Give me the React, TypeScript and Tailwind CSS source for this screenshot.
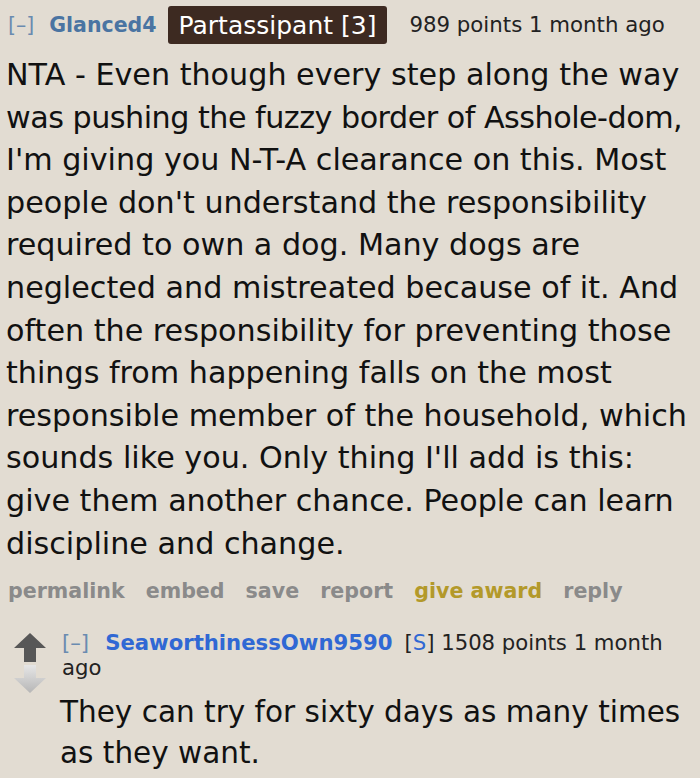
import React from 'react';

const actions = ['permalink', 'embed', 'save', 'report', 'give award', 'reply'];

// line breaks follow the reference
const bodyLines = [
    'NTA - Even though every step along the way',
    'was pushing the fuzzy border of Asshole-dom,',
    "I'm giving you N-T-A clearance on this. Most",
    "people don't understand the responsibility",
    'required to own a dog. Many dogs are',
    'neglected and mistreated because of it. And',
    'often the responsibility for preventing those',
    'things from happening falls on the most',
    'responsible member of the household, which',
    "sounds like you. Only thing I'll add is this:",
    'give them another chance. People can learn',
    'discipline and change.',
];

const App: React.FC = () => {
    return (
        <div className="w-[700px] h-[778px] bg-[#e2dcd2] overflow-hidden [font-family:'DejaVu_Sans',Verdana,sans-serif]">
            {/* Top comment header */}
            <div className="flex items-center pl-2 h-[50px]">
                <span className="text-[20.5px] text-[#6a8bb0]">[–]</span>
                <span className="text-[20.5px] font-bold text-[#4a74a2] ml-[15px]">Glanced4</span>
                <span className="ml-[11px] h-[38px] flex items-center bg-[#3d2a21] text-white text-[25px] leading-none px-[11px] rounded-[3px]">
                    Partassipant [3]
                </span>
                <span className="text-[21.3px] text-[#222] ml-[22px]">989 points 1 month ago</span>
            </div>

            {/* Top comment body */}
            <div className="text-[30.2px] leading-[42.6px] text-[#111] pl-[6px] mt-[4px] whitespace-nowrap">
                {bodyLines.map((line, i) => (
                    <div key={i} className={i === 1 ? 'tracking-[-0.5px]' : ''}>{line}</div>
                ))}
            </div>

            {/* Actions */}
            <ul className="flex gap-[21px] pl-2 mt-[12px] text-[20.6px] leading-[28px] font-bold">
                {actions.map(a => (
                    <li key={a} className={a === 'give award' ? 'text-[#b3992a]' : 'text-[#8a8a8a]'}>{a}</li>
                ))}
            </ul>

            {/* Reply */}
            <div className="flex mt-[25px] pl-[14px]">
                <div className="flex flex-col w-[32px] pt-[3px] shrink-0">
                    <svg width="32" height="29" viewBox="0 0 32 29">
                        <path d="M16 0 L32 15 L22 15 L22 29 L10 29 L10 15 L0 15 Z" fill="#575757" />
                    </svg>
                    <svg width="32" height="28" viewBox="0 0 32 28" className="mt-[3px]">
                        <defs>
                            <linearGradient id="dn" x1="0" y1="0" x2="0" y2="1">
                                <stop offset="0" stopColor="#e6e6e6" />
                                <stop offset="1" stopColor="#b6b6b6" />
                            </linearGradient>
                        </defs>
                        <path d="M10 0 L22 0 L22 13 L32 13 L16 28 L0 13 L10 13 Z" fill="url(#dn)" />
                    </svg>
                </div>
                <div className="ml-[16px] flex-1">
                    <div className="text-[21.2px] leading-[25px] text-[#222]">
                        <span className="text-[#6a8bb0] mr-[16px]">[–]</span>
                        <span className="font-bold text-[#3068d4] mr-[12px]">SeaworthinessOwn9590</span>
                        <span>[</span>
                        <span className="text-[#3068d4]">S</span>
                        <span>] 1508 points 1 month</span> <span>ago</span>
                    </div>
                    <p className="text-[29.5px] leading-[41px] text-[#111] mt-[12px] -ml-[2px]">
                        They can try for sixty days as many times as they want.
                    </p>
                </div>
            </div>
        </div>
    );
};

export default App;
